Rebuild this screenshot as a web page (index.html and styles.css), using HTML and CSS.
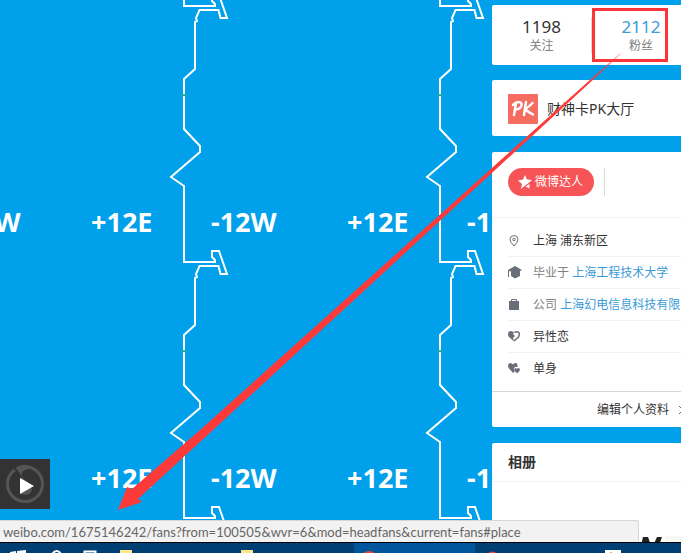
FILE: index.html
```html
<!DOCTYPE html>
<html lang="zh-CN">
<head>
<meta charset="utf-8">
<meta name="viewport" content="width=device-width, initial-scale=1">
<title>微博</title>
<link rel="stylesheet" href="styles.css">
</head>
<body>
<div class="screen">
  <svg class="wallpaper" aria-hidden="true">
    <defs>
      <g id="tile">
        <path class="zone" d="M184 96V129L200 146V152L171 177L184 186V262H215V260L212 257V251H219L227 274H220.500L218.500 266H199.500L196 274L197 277L195 278V325L184 335V350"/>
        <path class="tick" d="M181 95h6"/>
        <text x="91" y="232">+12E</text>
        <text x="211" y="232">-12W</text>
      </g>
      <g id="column">
        <use href="#tile" y="-256"/>
        <use href="#tile"/>
        <use href="#tile" y="256"/>
      </g>
    </defs>
    <use href="#column" x="-256"/>
    <use href="#column"/>
    <use href="#column" x="256"/>
  </svg>

  <main class="page">
    <aside class="side">
      <section class="card stats">
        <a class="stat" href="#follow"><strong>1198</strong><span>关注</span></a>
        <a class="stat stat-active" href="#fans"><strong>2112</strong><span>粉丝</span></a>
      </section>

      <a class="card hall" href="#pk">
        <svg class="hall-logo" viewBox="0 0 30 30" aria-hidden="true">
          <rect width="30" height="30" rx="1"/>
          <path d="M8 9L6 21M5 11Q9 7 12.500 8.500Q15 11 12 14Q10 15.500 8 15.500M18 8L16 21M24.500 9Q21 13 17 15Q20 18 25 20.500"/>
        </svg>
        <span>财神卡PK大厅</span>
      </a>

      <section class="card profile">
        <div class="badges">
          <a class="badge" href="#daren">
            <svg viewBox="0 0 14 14" aria-hidden="true"><path d="M7 0L9 4.500L14 5L10.500 8L6.500 11L3 14L4 9L0 5.500L5 4.500Z"/><path d="M11.500 9V13.500L7.500 11.500Z"/></svg>
            <span>微博达人</span>
          </a>
        </div>
        <ul class="facts">
          <li>
            <svg viewBox="0 0 14 14" aria-hidden="true"><path class="line" d="M6 12Q2 8 2 5.500A4 4 0 0 1 10 5.500Q10 8 6 12Z"/><circle class="line" cx="6" cy="5.500" r="1.300"/></svg>
            <span>上海 浦东新区</span>
          </li>
          <li class="muted">
            <svg viewBox="0 0 14 14" aria-hidden="true"><path d="M7 0L14 4L12 5V10L7 12.500L3 10V5.500L1 5V11H0V4Z"/></svg>
            <span>毕业于 <a href="#school">上海工程技术大学</a></span>
          </li>
          <li class="muted">
            <svg viewBox="0 0 14 14" aria-hidden="true"><path d="M1 3H11V12H1Z"/><path class="line" d="M3.500 4V1.500H8.500V4"/></svg>
            <span>公司 <a href="#company">上海幻电信息科技有限公司</a></span>
          </li>
          <li>
            <svg viewBox="0 0 14 14" aria-hidden="true"><path d="M6 2.500Q4 0 1 1.500Q-1 4 1 7L6 11.500L5 8L7 6L5 4Z"/><path class="line" d="M6.500 2.500Q9 1 11 2.500Q12 5 10.500 7L6 11" stroke-width="1.500"/></svg>
            <span>异性恋</span>
          </li>
          <li>
            <svg viewBox="0 0 14 14" aria-hidden="true"><path d="M5 2.500Q3 0 1 1.500Q-1 3.500 1 6.500L5 11L7 9Q5 6 7 5Q9 5 9.500 5Q10 2 8 1Q6 .5 5 2.500Z"/><path d="M9 7Q8 5.500 6.800 6.500Q6 7.500 7 9L9 11.500L11.500 9Q12.500 7.500 11.500 6.500Q10 5.500 9 7Z"/></svg>
            <span>单身</span>
          </li>
        </ul>
        <a class="edit" href="#edit"><span>编辑个人资料</span><svg viewBox="0 0 6 10" aria-hidden="true"><path d="M1 1L5 5L1 9"/></svg></a>
      </section>

      <section class="card album">
        <h2>相册</h2>
        <div class="album-body">
          <svg viewBox="0 0 173 60" aria-hidden="true"><path d="M131 72L135 55H140L144 66L149 55H154L148 72H143L139 62L136 72Z"/><path class="faint" d="M157 54H173V60H157Z"/></svg>
        </div>
      </section>
    </aside>
  </main>

  <button class="player" type="button" aria-label="播放">
    <svg viewBox="0 0 50 50" aria-hidden="true">
      <circle class="ring" cx="25" cy="25" r="17.500"/>
      <path class="swirl" d="M16 9Q24 5 32 9L25 11Q20 13 23 19L31 27Q34 35 26 36L21 35L21 19Z"/>
      <path class="notch" d="M14 8L22 19"/>
      <path class="play" d="M20 19L34 27L20 35Z"/>
    </svg>
  </button>

  <svg class="marks" aria-hidden="true">
    <defs>
      <linearGradient id="fade" gradientUnits="userSpaceOnUse" x1="622" y1="51" x2="590" y2="81">
        <stop offset="0" stop-color="#fd3a3a" stop-opacity=".2"/>
        <stop offset="1" stop-color="#fd3a3a"/>
      </linearGradient>
    </defs>
    <rect x="593.500" y="9.500" width="73" height="51"/>
    <path d="M621 54L213 430L138 499L142 502L118 510L127 487L132 489L200 430L620 53Z"/>
  </svg>

  <div class="status">weibo.com/1675146242/fans?from=100505&amp;wvr=6&amp;mod=headfans&amp;current=fans#place</div>

  <footer class="taskbar">
    <svg aria-hidden="true">
      <path class="active" d="M354 0H475V11H354Z"/>
      <path class="white" d="M10 9L16 8V11H10ZM17 8L26 7V11H17Z"/>
      <path class="outline" d="M52 11Q57 5 61 11M84.500 11V8.500H95.500V11"/>
      <path class="folder" d="M120 7H132V11H120ZM241 7H253V11H241Z"/>
      <path class="red" d="M362 11Q369 5 376 11ZM487 11Q492 6 498 11Z"/>
      <path class="white" d="M605 7H621V11H605Z"/>
      <path class="red" d="M609 11L611 9L613 11Z"/>
    </svg>
  </footer>
</div>
</body>
</html>
```
FILE: styles.css
```css
* { box-sizing: border-box; }

body {
  margin: 0;
  font: 12px/18px "Noto Sans", "Noto Sans CJK SC", sans-serif;
  color: #333;
}

a { color: inherit; text-decoration: none; }

.screen {
  position: relative;
  display: flex;
  flex-direction: column;
  height: 100vh;
  overflow: hidden;
  background: #00a0eb;
}

.wallpaper,
.marks {
  position: absolute;
  inset: 0;
  width: 100%;
  height: 100%;
  pointer-events: none;
}

.wallpaper text {
  font: bold 27px "Noto Sans", sans-serif;
  fill: #fff;
}

.zone { fill: none; stroke: #fff; stroke-width: 2; }
.tick { fill: none; stroke: #22a9ad; stroke-width: 2; }

.marks rect { fill: none; stroke: #fd3538; stroke-width: 3; }
.marks path { fill: url(#fade); }

.page {
  position: relative;
  flex: 1;
  min-height: 0;
  overflow: hidden;
  display: grid;
  grid-template-columns: 1fr 189px;
  padding-top: 5px;
}

.side {
  grid-column: 2;
  min-width: 0;
  display: flex;
  flex-direction: column;
  gap: 16px;
}

.card {
  flex: none;
  background: #fff;
  border-radius: 2px 0 0 2px;
  overflow: hidden;
}

.stats {
  display: flex;
  height: 60px;
  padding: 12px 0;
  margin-bottom: -1px;
}

.stat {
  flex: 0 0 99px;
  display: flex;
  flex-direction: column;
  align-items: center;
  color: #808080;
}

.stat + .stat { border-left: 1px solid #d9d9d9; }

.stat strong {
  font: 17px/20px "Noto Sans", sans-serif;
  color: #333;
}

.stat-active strong { color: #3a9bd9; }

.hall {
  display: flex;
  align-items: center;
  gap: 9px;
  height: 56px;
  padding: 2px 16px 0;
  font-size: 14px;
}

.hall-logo { width: 30px; height: 30px; }
.hall-logo rect { fill: #f56c60; }
.hall-logo path {
  fill: none;
  stroke: #fff;
  stroke-width: 2.5;
  stroke-linecap: round;
  stroke-linejoin: round;
}

.badges {
  display: flex;
  height: 66px;
  padding: 16px 16px 0;
  border-bottom: 1px solid #f2f2f2;
}

.badge {
  display: flex;
  align-items: center;
  gap: 3px;
  height: 28px;
  padding: 0 11px 0 10px;
  border-radius: 14px;
  background: #f65456;
  color: #fff;
}

.badge svg { width: 14px; height: 14px; fill: #fff; }

.badges::after {
  content: "";
  height: 28px;
  margin-left: 10px;
  border-left: 1px solid #d9d9d9;
}

.facts {
  list-style: none;
  margin: 0;
  padding: 7px 0 6px 16px;
}

.facts li {
  display: flex;
  align-items: center;
  gap: 11px;
  height: 32px;
  border-bottom: 1px solid #f2f2f2;
  white-space: nowrap;
}

.facts li:last-child { border-bottom: 0; }
.facts svg { flex: none; width: 14px; height: 14px; fill: #696e78; }
.facts .line { fill: none; stroke: #696e78; }
.muted { color: #808080; }
.muted a { color: #3a9bd9; }

.edit {
  display: flex;
  align-items: center;
  justify-content: flex-end;
  gap: 9px;
  height: 36px;
  border-top: 1px solid #d9d9d9;
}

.edit svg { width: 6px; height: 10px; margin-right: -3px; }
.edit path { fill: none; stroke: #666; }

.album h2 {
  margin: 0;
  padding: 0 16px;
  font-size: 14px;
  line-height: 38px;
  border-bottom: 1px solid #f2f2f2;
}

.album-body { height: 90px; padding-left: 16px; }
.album-body svg { display: block; width: 173px; height: 60px; fill: #222; }
.album-body .faint { fill: #f7f7f4; }

.player {
  position: absolute;
  left: 0;
  bottom: 44px;
  width: 50px;
  height: 50px;
  padding: 0;
  border: 0;
  background: #333;
}

.player svg { display: block; }
.ring { fill: none; stroke: #555; stroke-width: 3; }
.swirl { fill: #555; }
.notch { stroke: #333; stroke-width: 2; }
.play { fill: #fff; }

.status {
  position: absolute;
  left: 0;
  bottom: 11px;
  width: 639px;
  max-width: 100%;
  height: 22px;
  padding: 0 3px;
  border: 1px solid #d5d5d5;
  border-width: 1px 1px 0 0;
  border-radius: 0 3px 0 0;
  background: #f2f2f2;
  color: #666;
  font: 13px/22px Lato, sans-serif;
  white-space: nowrap;
}

.taskbar {
  position: relative;
  height: 11px;
  background: #003f73;
  border-top: 1px solid #000;
}

.taskbar svg { display: block; width: 100%; height: 11px; }
.active { fill: #00569c; }
.white { fill: #fff; }
.outline { fill: none; stroke: #fff; stroke-width: 2; }
.folder { fill: #ffe68c; }
.red { fill: #e5453f; }
```
